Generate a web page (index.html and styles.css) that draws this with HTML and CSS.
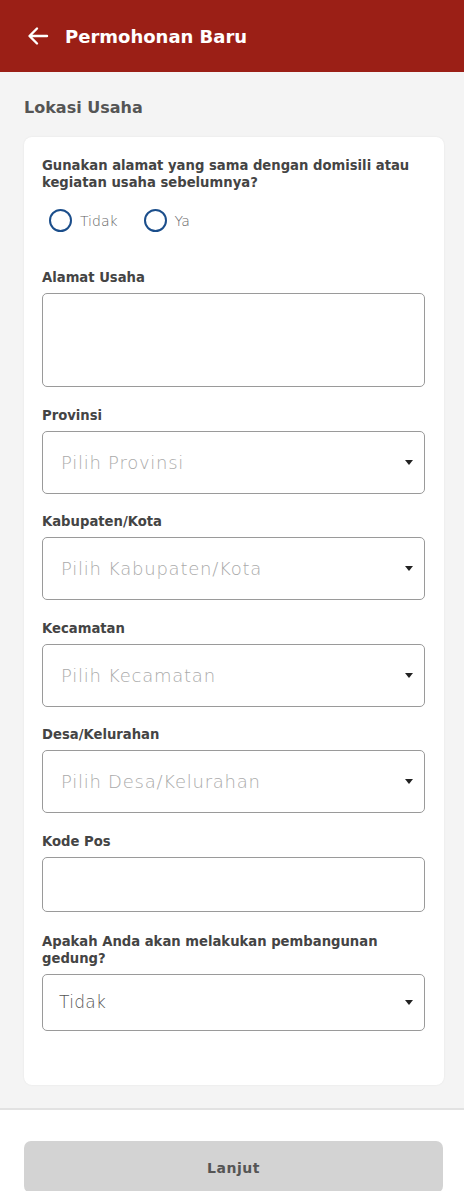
FILE: index.html
```html
<!DOCTYPE html>
<html lang="id">
<head>
<meta charset="utf-8">
<title>Permohonan Baru</title>
<link rel="stylesheet" href="styles.css">
</head>
<body>
<header class="topbar">
  <svg class="back" width="22" height="20" viewBox="0 0 22 20" aria-hidden="true">
    <path d="M20 10H3M10 2.5L2.5 10L10 17.5" fill="none" stroke="#fff" stroke-width="2.4" stroke-linecap="round" stroke-linejoin="round"/>
  </svg>
  <h1 class="title">Permohonan Baru</h1>
</header>
<main class="content">
  <h2 class="section">Lokasi Usaha</h2>
  <div class="card">
    <div class="question">Gunakan alamat yang sama dengan domisili atau kegiatan usaha sebelumnya?</div>
    <div class="radios">
      <label class="radio"><span class="circle"></span><span class="rtext">Tidak</span></label>
      <label class="radio"><span class="circle"></span><span class="rtext">Ya</span></label>
    </div>

    <div class="field first">
      <div class="label">Alamat Usaha</div>
      <div class="box textarea"></div>
    </div>
    <div class="field">
      <div class="label">Provinsi</div>
      <div class="box select"><span class="ph">Pilih Provinsi</span><span class="caret"></span></div>
    </div>
    <div class="field">
      <div class="label">Kabupaten/Kota</div>
      <div class="box select"><span class="ph">Pilih Kabupaten/Kota</span><span class="caret"></span></div>
    </div>
    <div class="field">
      <div class="label">Kecamatan</div>
      <div class="box select"><span class="ph">Pilih Kecamatan</span><span class="caret"></span></div>
    </div>
    <div class="field">
      <div class="label">Desa/Kelurahan</div>
      <div class="box select"><span class="ph">Pilih Desa/Kelurahan</span><span class="caret"></span></div>
    </div>
    <div class="field">
      <div class="label">Kode Pos</div>
      <div class="box input"></div>
    </div>
    <div class="field last">
      <div class="label">Apakah Anda akan melakukan pembangunan gedung?</div>
      <div class="box select short"><span class="val">Tidak</span><span class="caret"></span></div>
    </div>
  </div>
</main>
<footer class="footer">
  <button class="btn" type="button">Lanjut</button>
</footer>
</body>
</html>
```
FILE: styles.css
```css
* { box-sizing: border-box; }
html, body { margin: 0; padding: 0; }
body {
  width: 464px;
  height: 1191px;
  overflow: hidden;
  background: #f4f4f4;
  font-family: "DejaVu Sans", "Noto Sans", sans-serif;
  color: #444;
}
.topbar {
  height: 72px;
  background: #9b1f16;
  display: flex;
  align-items: center;
  padding-left: 27px;
  gap: 16px;
}
.back { display: block; }
.title {
  margin: 0;
  color: #fff;
  font-size: 18px;
  font-weight: 700;
  letter-spacing: 0;
}
.content { padding: 26px 20px 0 24px; }
.section {
  margin: 0 0 19px 0;
  font-size: 16px;
  font-weight: 700;
  color: #555;
  line-height: 20px;
}
.card {
  background: #fff;
  border-radius: 8px;
  box-shadow: 0 0 2px rgba(0,0,0,0.08);
  padding: 20px 19px 53px 18px;
  height: 948px;
}
.question {
  font-size: 13.2px;
  font-weight: 700;
  color: #444;
  line-height: 17px;
}
.radios {
  display: flex;
  gap: 26px;
  margin-top: 18px;
  padding-left: 7px;
}
.radio { display: flex; align-items: center; gap: 8px; }
.circle {
  width: 23px; height: 23px;
  border: 2.5px solid #1b4e8b;
  border-radius: 50%;
  display: block;
}
.rtext { font-size: 14px; color: #666; font-weight: 300; }
.field { margin-top: 19.5px; }
.field.first { margin-top: 37px; }
.field.last { margin-top: 21px; }
.label {
  font-size: 13.2px;
  font-weight: 700;
  color: #444;
  line-height: 17px;
  margin-bottom: 7px;
}
.box {
  border: 1px solid #9a9a9a;
  border-radius: 5px;
  background: #fff;
}
.textarea { height: 94px; }
.select {
  height: 63px;
  display: flex;
  align-items: center;
  justify-content: space-between;
  padding: 0 11px 0 18px;
}
.select.short { height: 57px; padding-left: 16px; }
.input { height: 55px; }
.ph { font-size: 18px; color: #aaa; font-weight: 300; letter-spacing: 0.75px; }
.val { font-size: 17px; color: #555; font-weight: 300; letter-spacing: 0.3px; }
.caret {
  width: 0; height: 0;
  border-left: 4px solid transparent;
  border-right: 4px solid transparent;
  border-top: 5px solid #222;
}
.footer {
  position: absolute;
  left: 0; right: 0; top: 1108px; bottom: 0;
  background: #fff;
  border-top: 2px solid #e2e2e2;
  padding: 31px 21px 0 24px;
}
.btn {
  width: 419px;
  height: 52px;
  border: none;
  border-radius: 7px;
  background: #d3d3d3;
  color: #555;
  font-family: "DejaVu Sans", sans-serif;
  font-size: 14px;
  font-weight: 700;
  letter-spacing: 0.5px;
  padding-bottom: 0;
}
```
